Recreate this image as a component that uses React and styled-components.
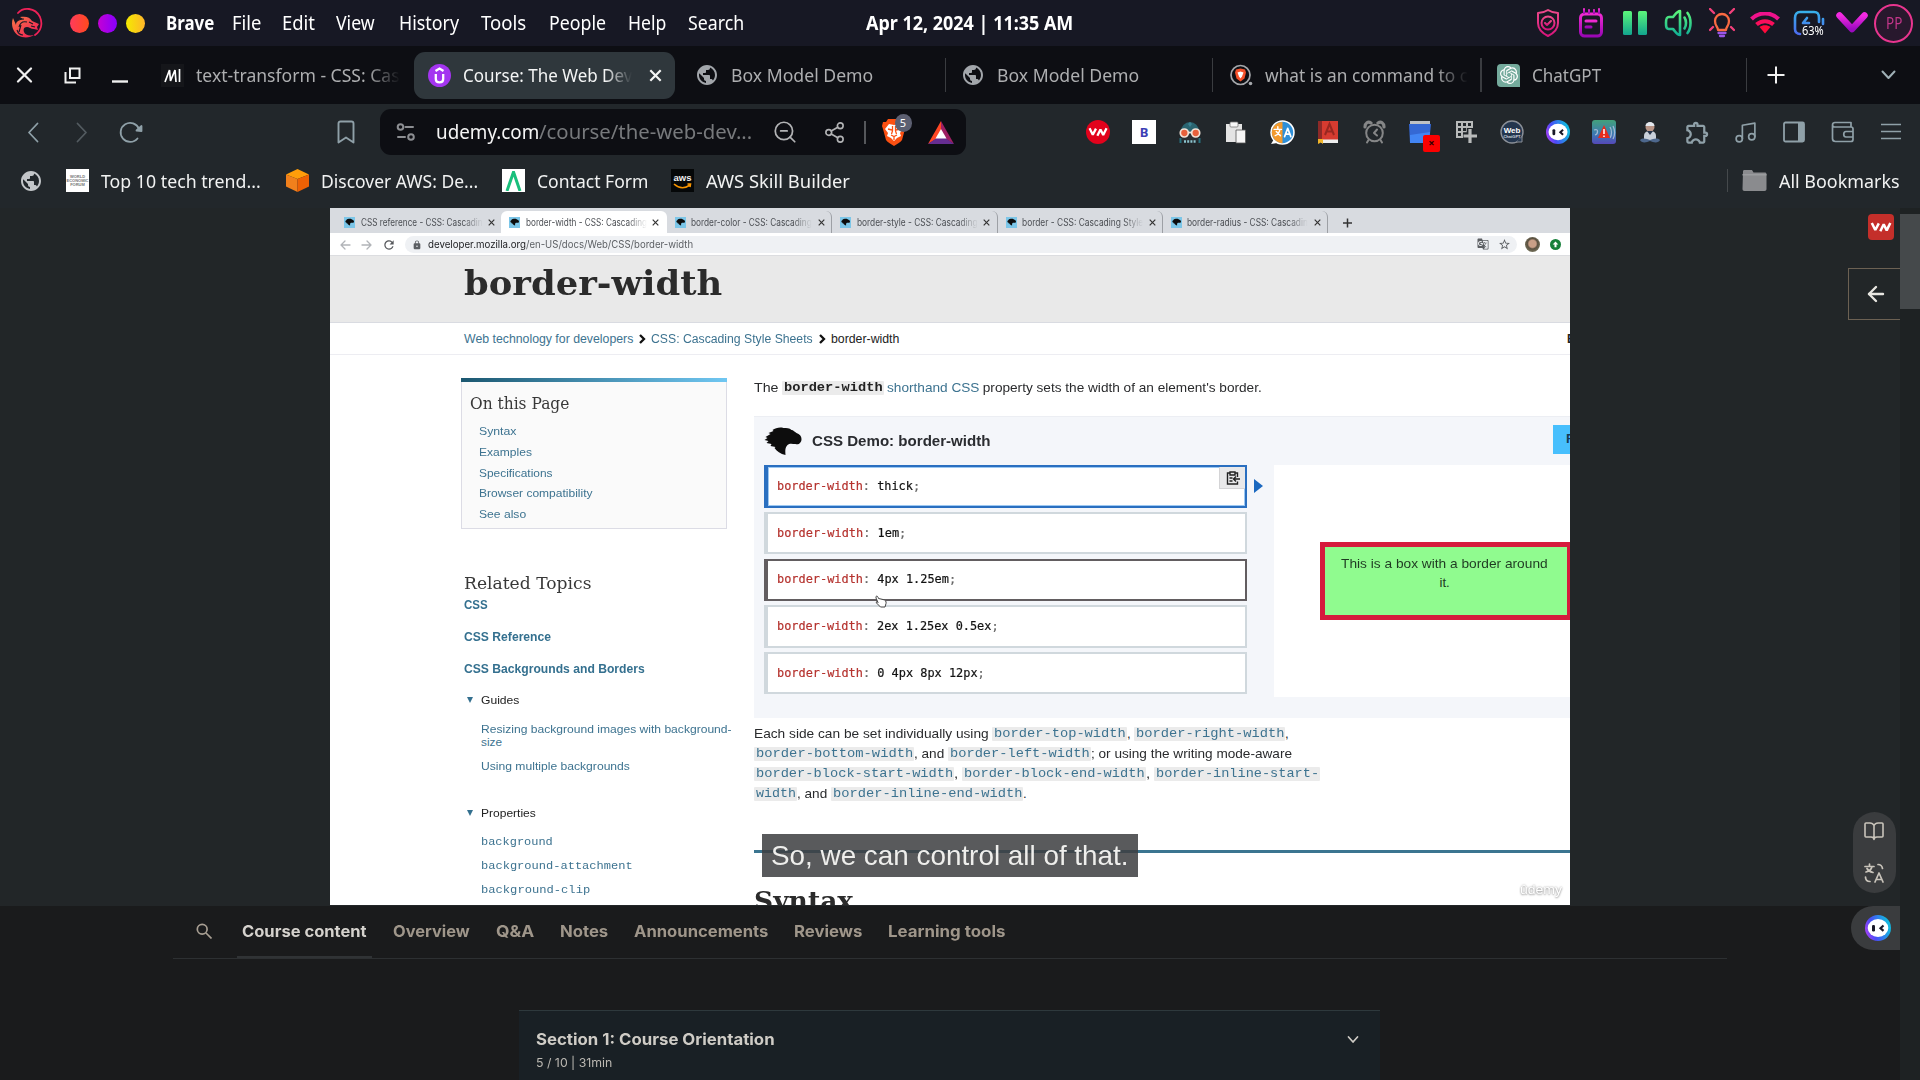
import React, { useLayoutEffect, useRef, useState } from "react";
import styled, { createGlobalStyle, css } from "styled-components";
import { Music, Share2, ArrowLeft, ZoomOut } from "lucide-react";
import { MdPublic, MdGTranslate, MdLock, MdStarBorder, MdRefresh, MdOutlineExtension } from "react-icons/md";
import { SiBrave, SiOpenai } from "react-icons/si";

const Global = createGlobalStyle`
  * { box-sizing: border-box; }
  body { margin: 0; background: #1a1b1c; overflow: hidden; font-family: "Noto Sans", "Open Sans", sans-serif; }
  svg { display: block; flex-shrink: 0; }
`;

const ui = '"Noto Sans", "Open Sans", sans-serif';
const sans = '"Liberation Sans", Arial, sans-serif';
const mono = '"Liberation Mono", "Courier New", monospace';
const code = '"DejaVu Sans Mono", monospace';
const slab = '"DejaVu Serif", serif';
const inter = 'Inter, "Open Sans", sans-serif';

/* Text whose glyph run is condensed or expanded to a given measure */
const FitBox = styled.span`
  display: inline-block;
  flex-shrink: 0;
  white-space: pre;
  width: ${(p) => p.$w}px;
  ${(p) => p.$fade && css`
    -webkit-mask-image: linear-gradient(90deg, #000 84%, transparent 100%);
    mask-image: linear-gradient(90deg, #000 84%, transparent 100%);
  `}
`;
const FitRun = styled.span`
  display: inline-block;
  transform-origin: 0 50%;
`;
function Fit({ w, fade, children, className }) {
  const ref = useRef(null);
  const [k, setK] = useState(1);
  useLayoutEffect(() => {
    if (ref.current) setK(w / ref.current.offsetWidth);
  }, [w, children]);
  return (
    <FitBox $w={w} $fade={fade} className={className}>
      <FitRun ref={ref} style={{ transform: `scaleX(${k})` }}>{children}</FitRun>
    </FitBox>
  );
}

const Screen = styled.div`
  width: 1920px; height: 1080px; overflow: hidden;
  display: flex; flex-direction: column; background: #1a1b1c;
`;

/* ---------- system bar ---------- */
const SystemBar = styled.header`
  height: 46px; flex-shrink: 0; background: #171824; color: #fff;
  display: grid; grid-template-columns: 866px 1fr auto; align-items: center;
`;
const SystemLeft = styled.div`display: flex; align-items: center; padding-left: 11px;`;
const Lights = styled.div`display: flex; gap: 9px; margin: 0 21px 0 27px;`;
const Light = styled.i`width: 19px; height: 19px; border-radius: 50%; background: ${(p) => p.$c};`;
const MenuItem = styled(Fit)`
  font: ${(p) => (p.$bold ? 700 : 400)} 19px/28px ${ui};
  margin-right: ${(p) => p.$gap}px;
`;
const Clock = styled(Fit)`font: 700 19px/28px ${ui}; margin-top: -1px;`;
const Tray = styled.div`display: flex; align-items: center; padding-right: 7px;`;
const TrayCell = styled.div`
  width: 43.5px; height: 44px; display: grid; place-items: center; position: relative;
`;
const Percent = styled(Fit)`
  position: absolute; left: 15px; top: 22px; font: 400 12px/16px ${ui};
`;
const Avatar = styled.div`
  width: 39px; height: 39px; border-radius: 50%; border: 2px solid #e8358f; background: #28182d;
  color: #c3368a; display: grid; place-items: center; font: 400 16px/20px ${ui};
`;

/* ---------- browser tabs ---------- */
const TabStrip = styled.div`
  height: 58px; flex-shrink: 0; background: #0d0e13; display: flex; align-items: center; color: #b0b1b3;
`;
const WindowButtons = styled.div`width: 149px; padding-left: 16px; display: flex; align-items: center; gap: 31px;`;
const Tab = styled.div`
  width: ${(p) => p.$w}px; height: 47px; flex-shrink: 0; padding-left: ${(p) => p.$pl}px;
  display: flex; align-items: center; gap: 12px;
  border-radius: ${(p) => (p.$active ? "11px" : 0)};
  background: ${(p) => (p.$active ? "#2f373c" : "transparent")};
  color: ${(p) => (p.$active ? "#f4f5f5" : "#adaeb0")};
  font: 400 18.5px/26px ${ui};
`;
const TabClose = styled.div`margin-left: 5px;`;
const Divider = styled.i`
  width: 1.5px; height: ${(p) => p.$h}px; background: #3a3c40; margin-left: auto; flex-shrink: 0;
`;
const Favicon = styled.div`
  width: 23px; height: 23px; flex-shrink: 0; display: grid; place-items: center; overflow: hidden;
  background: ${(p) => p.$bg || "transparent"}; border-radius: ${(p) => p.$r || 0};
  color: ${(p) => p.$c || "#fff"}; position: relative;
`;
const StripActions = styled.div`flex: 1; padding: 0 24px 0 20px; display: flex; justify-content: space-between; align-items: center;`;

/* ---------- toolbar ---------- */
const Toolbar = styled.div`
  height: 56px; flex-shrink: 0; background: #22272b; display: flex; align-items: center; color: #8fa0a8;
`;
const Nav = styled.div`width: 380px; padding: 0 25px 0 27px; display: flex; align-items: center; gap: 37px;`;
const Reload = styled.div`margin-left: -6px;`;
const NavEnd = styled.div`margin-left: auto;`;
const Address = styled.div`
  width: 586px; height: 46px; border-radius: 11px; background: #0d0e13; padding-left: 16px;
  display: flex; align-items: center; color: #b2b3b5; flex-shrink: 0;
`;
const Url = styled.div`
  margin: 0 20px 0 20px; display: flex; font: 400 19px/28px ${ui}; color: #77797c;
  b { font-weight: 400; color: #f5f5f5; }
`;
const ShareSlot = styled.div`margin-left: 25px;`;
const Rule = styled.i`width: 1.5px; height: 23px; background: #55575b; margin: 0 15px 0 18px;`;
const Shield = styled.div`position: relative; margin-right: 21px; color: #fb5012;`;
const Count = styled.span`
  position: absolute; left: 14px; top: -4px; width: 17px; height: 18px; border-radius: 9px;
  background: #5c5f71; color: #fff; text-align: center; font: 400 11px/17px ${ui};
`;
const Extensions = styled.div`display: flex; align-items: center; margin-left: 109px;`;
const ExtCell = styled.div`
  width: ${(p) => (p.$wide ? 48.5 : 46)}px; height: 46px; display: grid; place-items: center; position: relative; flex-shrink: 0;
`;
const Chip = styled.div`
  width: 24px; height: 24px; display: grid; place-items: center; overflow: hidden;
  border-radius: ${(p) => p.$r || 0}; background: ${(p) => p.$bg}; color: ${(p) => p.$c};
  font: ${(p) => p.$font};
`;
const RedBadge = styled.span`
  position: absolute; left: 26px; top: 26px; width: 17px; height: 17px; border-radius: 2px;
  background: #fb0000; color: #300; text-align: center; font: 700 11px/16px ${ui};
`;

/* ---------- bookmarks ---------- */
const Bookmarks = styled.div`
  height: 48px; flex-shrink: 0; background: #22272b; padding: 0 20px 7px 19px; display: flex; align-items: center; color: #f1f2f2;
`;
const Bookmark = styled.div`
  display: flex; align-items: center; gap: 12px; margin-right: ${(p) => p.$gap}px; font: 400 18.5px/28px ${ui};
`;
const BookmarkEnd = styled.div`display: flex; align-items: center; gap: 12px; margin-left: auto; font: 400 18.5px/28px ${ui};`;
const BookmarkRule = styled.i`width: 1.5px; height: 23px; background: #45494c; margin-right: 2px;`;
const WefText = styled.span`font: 700 4px/4px ${sans}; color: #777; text-align: center; white-space: pre;`;
const Aws = styled.div`
  display: flex; flex-direction: column; align-items: center; font: 700 9.5px/10px ${sans}; color: #eee;
`;

/* ---------- page ---------- */
const Body = styled.main`flex: 1; min-height: 0; display: flex; position: relative;`;
const Page = styled.div`width: 1900px; display: flex; flex-direction: column;`;
const Scrollbar = styled.div`width: 20px; background: #1e2223; padding-top: 6px;`;
const Thumb = styled.div`height: 95px; background: #45494b;`;
const Stage = styled.section`height: 697.5px; flex-shrink: 0; background: #222628; padding-left: 330px;`;
const Video = styled.div`
  width: 1240px; height: 697px; background: #fff; position: relative; overflow: hidden; color: #1f2123;
  font-family: ${sans};
`;
const InnerTabs = styled.div`height: 25px; background: #d8dbe0; display: flex; align-items: flex-end; padding-left: 6px;`;
const InnerTab = styled.div`
  width: 165.4px; height: 22px; display: flex; align-items: center; padding: 0 0 0 8px; gap: 5.5px; flex-shrink: 0;
  background: ${(p) => (p.$active ? "#fff" : "transparent")}; border-radius: 6px 6px 0 0;
  font: 400 10px/14px Inter, ${sans}; color: #4a4d52;
  border-right: 1px solid ${(p) => (p.$rule ? "#9da0a5" : "transparent")};
`;
const InnerIcon = styled.i`
  width: 11px; height: 11px; background: #7cc6e8; display: grid; place-items: center; flex-shrink: 0;
`;
const NewTab = styled.div`padding: 0 0 5px 15px;`;
const InnerBar = styled.div`
  height: 23px; border-bottom: 1px solid #dcdde0; display: flex; align-items: center; padding: 1px 0 0 10px; gap: 10px; color: #56585c;
`;
const Omni = styled.div`
  width: 1112px; height: 17px; border-radius: 9px; background: #eff1f4; padding: 0 6px 0 7px; margin-left: -1px;
  display: flex; align-items: center; gap: 6px; font: 400 10.5px/14px Inter, ${sans}; color: #5c5f63;
  b { font-weight: 400; color: #202124; }
`;
const OmniEnd = styled.div`margin-left: auto; display: flex; gap: 9px;`;
const Face = styled.i`
  width: 15px; height: 15px; border-radius: 50%; margin-left: -2px;
  background: radial-gradient(circle at 50% 45%, #c99f87 0 32%, #5a5040 46%, #8e9276 100%);
`;
const TitleBand = styled.div`
  height: 67px; background: #e9e9e9; border-bottom: 1px solid #d9dbe1; padding: 4px 0 0 134px;
`;
const Title = styled(Fit)`font: 700 34px/46px ${slab}; color: #2b2b2b;`;
const Crumbs = styled.nav`
  height: 32px; border-bottom: 1px solid #ededf2; padding: 0 0 0 134px; display: flex; align-items: center;
  font: 400 12.3px/18px ${sans}; color: #3d7390; gap: 5.5px;
`;
const CrumbNow = styled.span`color: #222;`;
const Cut = styled.b`margin-left: auto; width: 3px; overflow: hidden; font: 700 12px/14px ${sans}; color: #222;`;
const Columns = styled.div`display: flex; padding-left: 131px;`;
const Side = styled.aside`width: 293px; flex-shrink: 0; padding-top: 23px;`;
const Toc = styled.div`
  width: 266px; height: 151px; border: 1px solid #dcdce5; background: #fafafa; border-top: 0; padding: 0 0 0 9px;
`;
const TocBar = styled.div`height: 4px; margin: 0 -1px 0 -10px; background: linear-gradient(90deg, #1b5770, #70c7f2);`;
const SlabHead = styled(Fit)`display: block; font: 400 17px/24px ${slab}; color: #383838;`;
const TocTitle = styled(SlabHead)`margin: 9px 0 6px -1px;`;
const TocLink = styled(Fit)`display: block; margin-left: 8px; font: 400 11.6px/20.8px ${sans}; color: #3d7390;`;
const Related = styled.div`padding: 42px 0 0 3px;`;
const Topic = styled(Fit)`display: block; font: 700 12px/18px ${sans}; color: #34708f; margin-bottom: 14px; position: relative; top: 1px;`;
const Group = styled.div`
  display: flex; align-items: center; gap: 8px; height: 18px; padding-left: 3px; font: 400 11.8px/18px ${sans};
  color: #222; margin-top: ${(p) => p.$mt || 0}px;
  &::before { content: ""; border: 3px solid transparent; border-top: 6px solid #34708f; border-bottom: 0; }
`;
const SideLink = styled(Fit)`
  display: block; margin: ${(p) => p.$mt}px 0 0 17px; font: 400 11.8px/13px ${sans}; color: #3d7390;
`;
const SideCode = styled(Fit)`
  display: block; margin: ${(p) => p.$mt}px 0 0 17px; font: 400 11.8px/14px ${mono}; color: #3d7390;
`;
const Article = styled.article`width: 816px; flex-shrink: 0; padding-top: 23px;`;
const Line = styled.div`display: flex; align-items: center; height: 20.2px; font: 400 13.2px/18px ${sans}; white-space: pre; color: #2a2b2d;`;
const Link = styled.span`color: #3d7390; display: flex;`;
const Code = styled.span`
  display: flex; align-items: center; height: 14px; background: #ebebeb; border-radius: 1px; padding: 0 1.5px;
  font: ${(p) => (p.$bold ? 700 : 400)} 13px/14px ${mono}; color: ${(p) => (p.$bold ? "#222" : "#3d7390")};
`;
const Demo = styled.div`
  height: 302px; margin: 17.5px 0 6px; background: #f4f6fa; border-top: 1px solid #eceef3; padding-left: 10px;
`;
const DemoHead = styled.div`height: 48.5px; display: flex; align-items: center; gap: 10px; font: 700 15px/20px ${sans}; color: #2a2c30;`;
const Reset = styled.div`
  margin-left: auto; width: 17px; height: 29px; margin-bottom: 2px; overflow: hidden; background: #47bffd; padding-left: 13px;
  font: 700 13px/28px ${sans}; color: #173a52;
`;
const DemoRow = styled.div`display: flex;`;
const Choices = styled.div`width: 483px; display: flex; flex-direction: column; gap: 4.3px;`;
const Choice = styled.div`
  height: 42.4px; background: #fff; display: flex; align-items: center; padding: 0 0 1px 9px; position: relative;
  border: 2px solid ${(p) => p.$c}; border-left-width: 4px; font: 400 12.3px/18px ${code}; color: #111;
  box-shadow: ${(p) => (p.$glow ? "inset 0 0 0 1px #9cc8f2" : "none")};
  -webkit-text-stroke: 0.2px currentColor;
  em { font-style: normal; color: #b5332f; } i { font-style: normal; color: #666; }
`;
const CopyButton = styled.div`
  position: absolute; right: 0; top: 0; width: 26px; height: 22px; background: #e9e9ea; display: grid; place-items: center;
  border: 1px solid #d4d4d6; border-top: 0; border-right: 0; color: #222;
`;
const Pointer = styled.i`
  margin: 13.5px 11px 0 7px; width: 0; height: 0; border: 7.5px solid transparent; border-left: 9px solid #1b69c0; border-right: 0;
`;
const Output = styled.div`width: 296px; height: 232px; background: #fff; padding: 77px 0 0 46px;`;
const Sample = styled.div`
  width: 250px; height: 78px; border: 5px solid #d61a3d; border-right-width: 3px; background: #90fb8f; padding: 8px 3px 0 0;
  display: flex; flex-direction: column; align-items: center; font: 400 13.2px/18.5px ${sans}; color: #1f3a22;
`;
const BlueRule = styled.hr`height: 3px; border: 0; background: #3b7590; margin: 46px 0 31px;`;
const Syntax = styled(Fit)`font: 700 26px/34px ${slab}; color: #2b2b2b;`;
const Caption = styled.div`
  position: absolute; left: 432px; top: 626px; width: 376px; height: 43px; background: rgba(62, 63, 65, 0.86);
  padding-left: 9px; color: #eeeeec; font: 400 28px/43px ${sans};
`;
const Watermark = styled(Fit)`
  position: absolute; left: 1190px; top: 672px; font: 400 13px/20px ${sans}; color: #fff;
  text-shadow: 0 0 2px #999, 0 1px 2px #aaa;
`;
const Cursor = styled.svg`position: absolute; left: 545px; top: 387px;`;

/* ---------- course panel ---------- */
const CoursePanel = styled.section`flex: 1; background: #1a1b1c; padding-left: 173px; border-bottom: 1px solid #0b0b0b;`;
const CourseTabs = styled.div`
  width: 1554px; height: 53px; border-bottom: 1px solid #2d3032; display: flex; padding-left: 23px; align-items: center;
  color: #9f968a; font: 700 16px/24px ${inter};
`;
const CourseTab = styled.div`
  height: 53px; padding: 14px ${(p) => (p.$active ? 5 : 0)}px 0 ${(p) => (p.$active ? 5 : 0)}px; margin-right: ${(p) => (p.$active ? 21 : 26)}px;
  color: ${(p) => (p.$active ? "#d5d2cd" : "#9f968a")};
  border-bottom: ${(p) => (p.$active ? "2px solid #303335" : "0")};
`;
const SearchMark = styled.svg`margin: 0 25px 1px 0;`;
const SectionCard = styled.div`
  width: 861px; height: 70px; margin: 51.5px 0 0 346px; background: #192025; border-top: 1px solid #2e393d;
  padding: 16px 21px 0 17px; display: flex; justify-content: space-between; align-items: flex-start; color: #cfccc6;
`;
const SectionTitle = styled(Fit)`display: block; font: 700 16px/24px ${inter};`;
const SectionMeta = styled(Fit)`display: block; font: 400 12px/16px ${inter}; margin-top: 4px; color: #bbb8b2;`;

/* ---------- floating widgets ---------- */
const VnButton = styled.div`
  position: absolute; left: 1868px; top: 6px; width: 26px; height: 26px; border-radius: 4px; background: #c42f2a;
  display: grid; place-items: center;
`;
const CollapseButton = styled.div`
  position: absolute; left: 1848px; top: 60px; width: 52px; height: 52px; border: 1px solid #6c6153; border-right: 0;
  color: #e8e6e1; display: grid; place-items: center; padding-left: 2px;
`;
const ToolPill = styled.div`
  position: absolute; left: 1853px; top: 604px; width: 43px; height: 81px; border-radius: 22px; background: #3a3c3e;
  display: flex; flex-direction: column; align-items: center; justify-content: space-between; padding: 10px 2px 10px 0;
`;
const BotBubble = styled.div`
  position: absolute; left: 1851px; top: 698px; width: 49px; height: 44px; border-radius: 22px 0 0 22px; background: #3a3c3e;
  display: grid; place-items: center; padding-left: 5px;
`;

const line = { fill: "none", stroke: "currentColor", strokeLinecap: "round", strokeLinejoin: "round" };

const Vn = ({ size }) => (
  <svg width={size} height={size} viewBox="0 0 24 24" fill="none" stroke="#fff" strokeWidth="2.5" strokeLinejoin="bevel">
    <path d="M2.800 8l3.500 7L9.800 8.300" /><path d="M11.300 16.200l3.400-7 3 6.200L21.300 8" />
  </svg>
);
const Bot = ({ size }) => (
  <svg width={size} height={size} viewBox="0 0 26 26">
    <defs>
      <linearGradient id="bot" x1="0" y1="1" x2="1" y2="0.7">
        <stop offset="0" stopColor="#c43cf5" /><stop offset=".4" stopColor="#4a4cf7" /><stop offset="1" stopColor="#13b6e0" />
      </linearGradient>
    </defs>
    <circle cx="13" cy="13" r="13" fill="url(#bot)" />
    <ellipse cx="13" cy="13" rx="10.3" ry="9" fill="#fff" />
    <rect x="7" y="10" width="3" height="6.5" rx="1.2" fill="#181828" />
    <path d="M18.5 10.5l-3 2.700 3 2.700" fill="none" stroke="#181828" strokeWidth="2.2" />
  </svg>
);
const Dino = ({ w, h }) => (
  <svg width={w} height={h} viewBox="0 0 37 28">
    <path fill="#0d0d0d" d="M1 10l5-3-2-1 5-2-1-1C11 1 15 0 19 1c3 0 6 0 8 2 2 0 3 2 5 3 3 1 5 3 5 6 0 4-3 6-6 5-3 0-6-1-8 1-3 3-2 7-2 10-5-1-9-4-11-7l1-1-5-1 1-2-5-1 2-2-4-1 3-2z" />
  </svg>
);
const Dragon = () => (
  <svg width="32" height="32" viewBox="0 0 32 32">
    <defs>
      <linearGradient id="dr" x1="0" y1="0" x2="1" y2="1"><stop offset="0" stopColor="#fa7a45" /><stop offset="1" stopColor="#ef1358" /></linearGradient>
    </defs>
    <path d="M7 6C12 0 24 0 29 10c3 7 1 14-5 18" fill="none" stroke="#ef2258" strokeWidth="1.8" strokeLinecap="round" />
    <path d="M2 11C-1 19 3 28 11 30c5 1 9 0 12-2-5 1-9 0-10-3-1-3 0-5 3-5 2 0 4 2 7 2l4 1-1-3 2-3-7-3c-2-4-6-5-12-4l3 2c-5 0-7 3-7 6l-3-7z" fill="url(#dr)" />
    <path d="M8 20c1-4 4-6 8-5M6 23c1 3 3 5 6 5M18 15l4 2M10 18l-2 7M13 12c-4 0-6 1-8 3M20 19l4 1" fill="none" stroke="#171824" strokeWidth="1.100" />
  </svg>
);
const Grad = ({ id, a, b }) => (
  <defs><linearGradient id={id} x1="0" y1="0" x2="0" y2="1"><stop offset="0" stopColor={a} /><stop offset="1" stopColor={b} /></linearGradient></defs>
);

const TrayIcons = [
  <svg width="26" height="30" viewBox="0 0 26 30" {...line} strokeWidth="2"><Grad id="t1" a="#ef4b8c" b="#d8147c" />
    <g stroke="url(#t1)"><path d="M13 2c3 2 6 3 10 3v10c0 6-4 10-10 13C7 25 3 21 3 15V5c4 0 7-1 10-3z" /><circle cx="13" cy="15" r="6.5" /><path d="M10 15l2 2 4-4" /></g></svg>,
  <svg width="26" height="30" viewBox="0 0 26 30" {...line} strokeWidth="3"><Grad id="t2" a="#f02bd0" b="#9b07b5" />
    <g stroke="url(#t2)"><rect x="2.5" y="6" width="21" height="22" rx="4" /><path d="M8 13h10M8 19h5" /><path d="M6 1v4M11 2v3M16 2v3M21 1v4" strokeWidth="2" /></g></svg>,
  <svg width="26" height="26" viewBox="0 0 26 26"><Grad id="t3" a="#5cf57a" b="#12a58e" />
    <rect x="1" y="1" width="9" height="24" rx="1.5" fill="url(#t3)" /><rect x="16" y="1" width="9" height="24" rx="1.5" fill="url(#t3)" /></svg>,
  <svg width="28" height="28" viewBox="0 0 28 28" {...line} strokeWidth="2.6"><Grad id="t4" a="#5cf57a" b="#12b095" />
    <g stroke="url(#t4)"><path d="M16 2v24c-3 0-5-4-7-6H5c-3 0-3-3-3-6s0-6 3-6h4c2-2 4-6 7-6zM20.500 8.500c2 3 2 8 0 11M23.500 4c4 5 4 15 0 20" /></g></svg>,
  <svg width="26" height="30" viewBox="0 0 26 30" {...line} strokeWidth="2.300">
    <path stroke="#fb6a42" d="M9 22c0-3-3-4-3-9a7 7 0 0 1 14 0c0 5-3 6-3 9z" /><path stroke="#f5407c" d="M1 1l4 4M25 1l-4 4M1 22l3-3M25 22l-3-3" /><path stroke="#9a55e8" d="M9.500 25h7M11 28h4" /></svg>,
  <svg width="30" height="22" viewBox="0 0 30 22" fill="none" strokeWidth="4">
    <path stroke="#f0128c" d="M1.500 7C9-.5 21-.5 28.500 7" /><path stroke="#fa0e5c" d="M6.500 12.500c5-4.500 12-4.500 17 0" /><path fill="#ff0a3c" d="M9.500 15c3-2.500 8-2.500 11 0L15 21.500z" /></svg>,
  <svg width="32" height="26" viewBox="0 0 32 26" {...line} strokeWidth="2.600"><Grad id="t5" a="#38b0ea" b="#4c6cf0" />
    <path stroke="url(#t5)" d="M7 24c-3 0-5-2-5-5V8c0-4 2-6 5-6h14c4 0 5 2 5 6v4M30 9v5M14 8l-4 5h6" /></svg>,
  <svg width="32" height="22" viewBox="0 0 32 22" {...line} strokeWidth="6.500"><Grad id="t6" a="#f32ae0" b="#9c0ac0" />
    <path stroke="url(#t6)" d="M3.500 3.500L16 17 28.500 3.500" /></svg>,
];

const Extension = [
  <Chip $bg="#e2021c" $r="50%"><Vn size={22} /></Chip>,
  <Chip $bg="#fff" $c="#3b3fb5" $font={`700 13px/24px ${ui}`}>B</Chip>,
  <svg width="24" height="24" viewBox="0 0 24 24"><path fill="#2a6470" d="M3 11a9 9 0 0 1 18 0v3H3z" /><path fill="#2b2f33" d="M4 14h16v7H4z" /><path d="M10 4l2-2 2 2-2 3z" fill="#3b8291" /><g fill="#e8613c" stroke="#f2e3d8" strokeWidth="1.700"><circle cx="6.300" cy="13" r="4" /><circle cx="17.700" cy="13" r="4" /></g><path d="M10 12.500h4" stroke="#f2e3d8" strokeWidth="1.700" /><path d="M6 21.500h12" stroke="#8cc5d0" strokeWidth="2.500" strokeDasharray="2 1.200" /><path d="M2.500 18v5M21.500 18v5" stroke="#27707e" strokeWidth="2" /></svg>,
  <svg width="24" height="24" viewBox="0 0 24 24"><path fill="#e4e4e4" d="M2 4h16v18H2z" /><rect x="6" y="2" width="8" height="5" rx="1" fill="#f8f8f8" stroke="#777" strokeWidth=".8" /><path fill="#f6f6f6" stroke="#555" strokeWidth=".8" d="M12 10h9.500v13H12z" /></svg>,
  <svg width="25" height="25" viewBox="0 0 24 24"><path d="M1 23l3-5 3 4z" fill="#fff" /><circle cx="12" cy="12" r="11" fill="#2e8fd8" stroke="#fff" strokeWidth="1.500" /><path d="M12 1.800a10.200 10.200 0 0 0 0 20.400z" fill="#f39a2c" /><path d="M4 9h7M7.500 6.500V9M5 15c3-1 4-3 4.500-6M6 11l4 4" {...line} stroke="#fff" strokeWidth="1.400" /><path d="M14 16l3-8 3 8M15 13.500h4" {...line} stroke="#fff" strokeWidth="1.600" /></svg>,
  <svg width="22" height="24" viewBox="0 0 22 24"><path fill="#d63b30" d="M1 1h20v19H1z" /><path fill="#8d2a28" d="M1 1h4v20H1z" /><path fill="#eee" d="M4 19.500h17V23H4z" /><path d="M8 15l4.500-11L17 15M10 11.500h5" fill="none" stroke="#982720" strokeWidth="2" /><path fill="#f0b429" d="M1 19h5v5l-2-1.500L1 24z" /></svg>,
  <svg width="23" height="24" viewBox="0 0 23 24" {...line} stroke="#858687" strokeWidth="2"><circle cx="11.500" cy="13" r="8.300" /><path d="M2 7c0-4 3-6 6-4M21 7c0-4-3-6-6-4" strokeWidth="3.200" /><path d="M14 9.500L11 13l3 2.500M5.500 20L4 22.500M17.500 20l1.500 2.500" /></svg>,
  <><svg width="24" height="24" viewBox="0 0 24 24"><path fill="#3568d4" d="M1 4h22l-2 19H2z" /><path fill="#4285f4" d="M2 15l20-3-1 11H2z" /><path fill="#bfc1c4" d="M2 1h20v3H2z" /></svg><RedBadge>×</RedBadge></>,
  <svg width="24" height="24" viewBox="0 0 24 24" fill="none" stroke="#b8baba"><path d="M3 2h15v15H3zM8 2v15M13 2v15M3 7h15M3 12h15" strokeWidth="2" /><path d="M16 8v16M9 15.500h15" stroke="#22272b" strokeWidth="6.500" /><path d="M16 9v14M9.500 16h13.500" strokeWidth="3.200" /></svg>,
  <svg width="24" height="24" viewBox="0 0 24 24"><circle cx="12" cy="12" r="11" fill="#24364e" stroke="#8b9098" strokeWidth="1.400" /><path d="M16 22h6v-5" fill="#24364e" stroke="#8b9098" /><text x="12" y="12.500" fill="#fff" fontFamily="Liberation Sans" fontWeight="700" fontSize="8" textAnchor="middle">Web</text><text x="12" y="18" fill="#cfd6dd" fontFamily="Liberation Sans" fontWeight="700" fontSize="4" textAnchor="middle">ChatGPT</text></svg>,
  <Bot size={24} />,
  <svg width="24" height="24" viewBox="0 0 24 24"><defs><linearGradient id="ex" x1="0" y1="0" x2="0" y2="1"><stop offset="0" stopColor="#43a17b" /><stop offset=".6" stopColor="#3c77b4" /><stop offset="1" stopColor="#5548b8" /></linearGradient></defs><rect width="24" height="24" rx="3" fill="url(#ex)" /><path d="M2 10c5-2 4 4 1 5M18 7c2 3 2 8 0 11M21 6c2 4 2 9 0 13" fill="none" stroke="#9fb8d6" strokeWidth="1.300" /><path fill="#e62c1c" d="M12 5l6 13H6z" /><path d="M12 9v5M12 15.500v1.500" stroke="#fff" strokeWidth="1.500" /></svg>,
  <svg width="22" height="24" viewBox="0 0 22 24"><circle cx="11" cy="7" r="4.500" fill="#b99587" /><path d="M6.500 6a4.500 4 0 0 1 9 0z" fill="#e4e8ee" /><path d="M5 16c0-4 3-5 6-5s6 1 6 5v4H5z" fill="#c9d0da" /><path d="M8 11l3 4 3-4z" fill="#26354c" /><path d="M1 20c3-3 7-1 10 0 3-1 7-3 10 0-1 3-6 3-10 1-4 2-9 2-10-1z" fill="#4d678c" /></svg>,
];

const siteTabs = [
  ["CSS reference - CSS: Cascadin", 122], ["border-width - CSS: Cascading", 121], ["border-color - CSS: Cascading", 121],
  ["border-style - CSS: Cascading", 121], ["border - CSS: Cascading Style", 121], ["border-radius - CSS: Cascadin", 121],
];
const choices = [["thick", "#2a6fc0", 143], ["1em", "#d0d8dd", 129], ["4px 1.25em", "#625d60", 179], ["2ex 1.25ex 0.5ex", "#d0d8dd", 222], ["0 4px 8px 12px", "#d0d8dd", 208]];
const courseTabs = [["Course content", 125], ["Overview", 77], ["Q&A", 38], ["Notes", 48], ["Announcements", 134], ["Reviews", 68], ["Learning tools", 117]];
const menus = [["File", 29, 21], ["Edit", 33, 21], ["View", 39, 24], ["History", 60, 22], ["Tools", 45, 23], ["People", 57, 22], ["Help", 38, 22], ["Search", 56, 0]];

const Close = ({ s = 10, w = 1.8, c = "currentColor" }) => (
  <svg width={s} height={s} viewBox="0 0 10 10"><path d="M1 1l8 8M9 1L1 9" stroke={c} strokeWidth={w} /></svg>
);
const Ref = ({ w, children, bold }) => <Code $bold={bold}><Fit w={w - 3}>{children}</Fit></Code>;
const CrumbArrow = () => <svg width="7" height="10" viewBox="0 0 7 10"><path d="M1 1l4 4-4 4" fill="none" stroke="#111" strokeWidth="2.300" /></svg>;

export default function App() {
  return (
    <Screen>
      <Global />
      <SystemBar>
        <SystemLeft>
          <Dragon />
          <Lights>
            <Light $c="linear-gradient(90deg,#ff3b5c,#ff4a1c)" /><Light $c="linear-gradient(90deg,#c400d4,#8700ff)" /><Light $c="linear-gradient(90deg,#f4ea00,#ffb52a)" />
          </Lights>
          <MenuItem w={48} $bold $gap={18}>Brave</MenuItem>
          {menus.map(([t, w, g]) => <MenuItem key={t} w={w} $gap={g}>{t}</MenuItem>)}
        </SystemLeft>
        <Clock w={207}>Apr 12, 2024 | 11:35 AM</Clock>
        <Tray>
          {TrayIcons.map((icon, i) => <TrayCell key={i}>{icon}{i === 6 && <Percent w={22}>63%</Percent>}</TrayCell>)}
          <Avatar><Fit w={16}>PP</Fit></Avatar>
        </Tray>
      </SystemBar>

      <TabStrip>
        <WindowButtons>
          <svg width="17" height="16" viewBox="0 0 17 16" {...line} stroke="#f0f0f0" strokeWidth="2.200"><path d="M2 1.500l13 13M15 1.500l-13 13" /></svg>
          <svg width="17" height="17" viewBox="0 0 17 17" fill="none" stroke="#f0f0f0" strokeWidth="2"><path d="M6 1.500h9.500V11H6zM1.500 5v10.500H12" /></svg>
          <svg width="17" height="17" viewBox="0 0 17 17"><path d="M0 14.500h16" stroke="#f0f0f0" strokeWidth="2.400" /></svg>
        </WindowButtons>
        <Tab $w={265} $pl={12}>
          <Favicon $bg="#15161a"><svg width="17" height="15" viewBox="0 0 17 15" fill="none" stroke="#fff" strokeWidth="1.700"><path d="M1 14L5.500 2l1 11L11 2l1 12M15.500 1v13" /></svg></Favicon>
          <Fit w={204} fade>text-transform - CSS: Cas</Fit>
        </Tab>
        <Tab $w={261} $pl={14} $active>
          <Favicon $bg="#a435f0" $r="50%"><svg width="11" height="17" viewBox="0 0 11 17" fill="none" stroke="#fff" strokeWidth="2.300"><path d="M1.500 4L5.500 1.500 9.500 4M1.800 7v5c0 4.500 7.400 4.500 7.400 0V7" /></svg></Favicon>
          <Fit w={169} fade>Course: The Web Dev</Fit>
          <TabClose><Close s={13} w={1.7} /></TabClose>
        </Tab>
        <Tab $w={271} $pl={20}><MdPublic size={24} color="#a2a6ab" /><Fit w={142}>Box Model Demo</Fit><Divider $h={34} /></Tab>
        <Tab $w={267} $pl={15}><MdPublic size={24} color="#a2a6ab" /><Fit w={142}>Box Model Demo</Fit><Divider $h={34} /></Tab>
        <Tab $w={268} $pl={17}>
          <Favicon $c="#fb4a1a"><svg width="23" height="23" viewBox="0 0 23 23"><circle cx="10.500" cy="11" r="9.500" fill="none" stroke="#a5a7ab" strokeWidth="1.700" /><path fill="#f4502a" d="M10.500 4.500l4.500 1 1 3-1.500 6-4 3-4-3L5 8.500l1-3z" /><path fill="#fff" d="M10.500 7.500l3 1-1.500 4-1.500 2-1.500-2-1.500-4z" /><circle cx="20.500" cy="19.500" r="1.800" fill="#a5a7ab" /></svg></Favicon>
          <Fit w={203} fade>what is an command to c</Fit><Divider $h={34} />
        </Tab>
        <Tab $w={266} $pl={16}><Favicon $bg="#74aa9c" $r="4px 4px 0 4px"><SiOpenai size={18} /></Favicon><Fit w={69}>ChatGPT</Fit><Divider $h={34} /></Tab>
        <StripActions>
          <svg width="18" height="18" viewBox="0 0 18 18" stroke="#f2f2f2" strokeWidth="2"><path d="M9 .5v17M.5 9h17" /></svg>
          <svg width="15" height="10" viewBox="0 0 15 10" {...line} stroke="#9fb0b6" strokeWidth="2"><path d="M1.500 1.500l6 6.500 6-6.500" /></svg>
        </StripActions>
      </TabStrip>

      <Toolbar>
        <Nav>
          <svg width="12" height="21" viewBox="0 0 12 21" {...line} strokeWidth="1.800"><path d="M10.500 1.500L2 10.500l8.500 9" /></svg>
          <svg width="12" height="21" viewBox="0 0 12 21" {...line} stroke="#535b60" strokeWidth="1.800"><path d="M1.500 1.500l8.500 9-8.500 9" /></svg>
          <Reload><svg width="24" height="24" viewBox="0 0 24 24" {...line} strokeWidth="1.800"><path d="M20 9A9.500 9.500 0 1 0 18.500 18.500" /><path d="M22.500 6v5l-5-.5z" fill="currentColor" /></svg></Reload>
          <NavEnd><svg width="18" height="24" viewBox="0 0 18 24" {...line} strokeWidth="1.900"><path d="M1.500 3.500c0-1.500.7-2 2-2h11c1.300 0 2 .5 2 2v19L9 17.500l-7.500 5z" /></svg></NavEnd>
        </Nav>
        <Address>
          <svg width="20" height="18" viewBox="0 0 20 18" {...line} stroke="#8c8e92" strokeWidth="2"><circle cx="4.500" cy="4" r="2.800" /><path d="M9.500 4H17M2 14h7" /><circle cx="15" cy="14" r="2.800" /></svg>
          <Url><b><Fit w={103}>udemy.com</Fit></b><Fit w={213}>/course/the-web-dev...</Fit></Url>
          <ZoomOut size={26} strokeWidth={1.6} />
          <ShareSlot><Share2 size={23} strokeWidth={1.7} /></ShareSlot>
          <Rule />
          <Shield>
            <svg width="26" height="28" viewBox="0 0 26 28"><path fill="#fb5012" d="M7 1h12l2 3 3 0 1 4-1 3-3 11c-1 2-5 4-8 6-3-2-7-4-8-6L2 11 1 8l1-4h3z" /><path fill="#fff" d="M8 6l5 1 5-1 4 5-3 4 1 3-4 2-3 3-3-3-4-2 1-3-3-4z" /><path fill="none" stroke="#fb5012" strokeWidth="1.300" d="M7 11l4 1M19 11l-4 1M11.500 8v5l-1 3M14.500 8v5l1 3M10 17l3 1.500 3-1.500M13 19v3" /></svg>
            <Count>5</Count>
          </Shield>
          <svg width="26" height="23" viewBox="0 0 26 23"><path d="M13 0L0 23l13-8z" fill="#ff4724" /><path d="M13 0l13 23-13-8z" fill="#9e1f63" /><path d="M0 23h26l-13-9z" fill="#662d91" /><path d="M13 8l5.500 9.500h-11z" fill="#fff" /></svg>
        </Address>
        <Extensions>
          {Extension.map((icon, i) => <ExtCell key={i}>{icon}</ExtCell>)}
          <ExtCell $wide><MdOutlineExtension size={27} /></ExtCell>
          <ExtCell $wide><Music size={25} strokeWidth={1.6} /></ExtCell>
          <ExtCell $wide><svg width="22" height="22" viewBox="0 0 22 22"><rect x="1" y="1.500" width="20" height="19" rx="1.500" fill="none" stroke="currentColor" strokeWidth="1.800" /><path d="M15 1.500h6v19h-6z" fill="currentColor" /></svg></ExtCell>
          <ExtCell $wide><svg width="24" height="22" viewBox="0 0 24 22" {...line} strokeWidth="1.700"><path d="M1.500 4.500v13c0 2 1 3 3 3H20c1.500 0 2-.5 2-2V8c0-1.500-.5-2-2-2H3.500C2 6 1.500 5.500 1.500 4s1-2.500 2.500-2.500h16V6M22 10.500h-7c-3 0-3 5.500 0 5.500h7" /></svg></ExtCell>
          <ExtCell $wide><svg width="20" height="18" viewBox="0 0 20 18" stroke="currentColor" strokeWidth="1.700"><path d="M0 1.500h20M0 8.500h20M0 15.500h20" /></svg></ExtCell>
        </Extensions>
      </Toolbar>

      <Bookmarks>
        <Bookmark $gap={23}><MdPublic size={24} color="#c3c6c9" /></Bookmark>
        <Bookmark $gap={25}><Favicon $bg="#fff"><WefText>{"WORLD\nECONOMIC\nFORUM"}</WefText></Favicon><Fit w={160}>Top 10 tech trend...</Fit></Bookmark>
        <Bookmark $gap={24}><svg width="23" height="23" viewBox="0 0 23 23"><path fill="#ff9d0a" d="M11.500 0L23 5.500 11.500 10 0 5.500z" /><path fill="#f1801c" d="M0 5.500L11.500 10v13L0 17.500z" /><path fill="#ee6104" d="M23 5.500L11.500 10v13L23 17.500z" /></svg><Fit w={157}>Discover AWS: De...</Fit></Bookmark>
        <Bookmark $gap={23}><Favicon $bg="#fff"><svg width="17" height="20" viewBox="0 0 17 20" fill="none" stroke="#19bf7c" strokeWidth="3"><path d="M2 20L8.500 1 15 20" /></svg></Favicon><Fit w={111}>Contact Form</Fit></Bookmark>
        <Bookmark $gap={0}>
          <Favicon $bg="#050708"><Aws><Fit w={18}>aws</Fit><svg width="19" height="6" viewBox="0 0 19 6" fill="none" stroke="#f79400" strokeWidth="1.600"><path d="M1 1c5 4.500 11 4.500 16 1M14.500 1l3 0-.5 3" /></svg></Aws></Favicon>
          <Fit w={144}>AWS Skill Builder</Fit>
        </Bookmark>
        <BookmarkEnd>
          <BookmarkRule />
          <svg width="25" height="21" viewBox="0 0 25 21"><path fill="#8a8b8e" d="M1 1.500C1 .5 1.500 0 2.500 0H10l1.500 2.500h11c1.500 0 2 .5 2 2V19c0 1.300-.7 2-2 2h-20C1.200 21 .5 20.300.5 19z" /><path fill="#9b9c9f" d="M.5 4h24v1.500H.5z" /></svg>
          <Fit w={121}>All Bookmarks</Fit>
        </BookmarkEnd>
      </Bookmarks>

      <Body>
        <Page>
          <Stage>
            <Video>
              <InnerTabs>
                {siteTabs.map(([t, w], i) => (
                  <InnerTab key={t} $active={i === 1} $rule={i > 1}>
                    <InnerIcon><Dino w={9} h={8} /></InnerIcon><Fit w={w} fade>{t}</Fit><Close s={7} w={1.7} c="#333" />
                  </InnerTab>
                ))}
                <NewTab><svg width="9" height="10" viewBox="0 0 9 10" stroke="#333" strokeWidth="1.500"><path d="M4.500 .5v9M0 5h9" /></svg></NewTab>
              </InnerTabs>
              <InnerBar>
                <svg width="11" height="10" viewBox="0 0 11 10" {...line} stroke="#b1b4b8" strokeWidth="1.300"><path d="M10 5H1.500M5 1L1 5l4 4" /></svg>
                <svg width="11" height="10" viewBox="0 0 11 10" {...line} stroke="#b1b4b8" strokeWidth="1.300"><path d="M1 5h8.500M6 1l4 4-4 4" /></svg>
                <MdRefresh size={14} />
                <Omni>
                  <MdLock size={10} />
                  <span><b><Fit w={98}>developer.mozilla.org</Fit></b><Fit w={167}>/en-US/docs/Web/CSS/border-width</Fit></span>
                  <OmniEnd><MdGTranslate size={12} /><MdStarBorder size={13} /></OmniEnd>
                </Omni>
                <Face />
                <svg width="11" height="11" viewBox="0 0 11 11"><circle cx="5.500" cy="5.500" r="5.500" fill="#16803a" /><path d="M5.500 2.500l2.800 3H6.500v2.800h-2V5.500H2.700z" fill="#fff" /></svg>
              </InnerBar>
              <TitleBand><Title w={258}>border-width</Title></TitleBand>
              <Crumbs>
                <Fit w={169}>Web technology for developers</Fit><CrumbArrow />
                <Fit w={162}>CSS: Cascading Style Sheets</Fit><CrumbArrow />
                <CrumbNow><Fit w={68}>border-width</Fit></CrumbNow><Cut>E</Cut>
              </Crumbs>
              <Columns>
                <Side>
                  <Toc>
                    <TocBar />
                    <TocTitle w={99}>On this Page</TocTitle>
                    <TocLink w={37}>Syntax</TocLink><TocLink w={53}>Examples</TocLink><TocLink w={74}>Specifications</TocLink>
                    <TocLink w={114}>Browser compatibility</TocLink><TocLink w={47}>See also</TocLink>
                  </Toc>
                  <Related>
                    <SlabHead w={127}>Related Topics</SlabHead>
                    <Topic w={24}>CSS</Topic><Topic w={87}>CSS Reference</Topic><Topic w={181}>CSS Backgrounds and Borders</Topic>
                    <Group><Fit w={38}>Guides</Fit></Group>
                    <SideLink w={251} $mt={14}>Resizing background images with background-</SideLink>
                    <SideLink w={21} $mt={0}>size</SideLink>
                    <SideLink w={149} $mt={11}>Using multiple backgrounds</SideLink>
                    <Group $mt={31}><Fit w={55}>Properties</Fit></Group>
                    <SideCode w={72} $mt={13}>background</SideCode>
                    <SideCode w={152} $mt={10}>background-attachment</SideCode>
                    <SideCode w={109} $mt={10}>background-clip</SideCode>
                  </Related>
                </Side>
                <Article>
                  <Line><Fit w={28}>The </Fit><Ref bold w={102}>border-width</Ref><Fit w={3}> </Fit><Link><Fit w={92}>shorthand CSS</Fit></Link><Fit w={283}> property sets the width of an element's border.</Fit></Line>
                  <Demo>
                    <DemoHead><Dino w={38} h={28} /><Fit w={179}>CSS Demo: border-width</Fit><Reset>F</Reset></DemoHead>
                    <DemoRow>
                      <Choices>
                        {choices.map(([v, c, w], i) => (
                          <Choice key={v} $c={c} $glow={i === 0}>
                            <Fit w={w}><em>border-width</em><i>: </i>{v}<i>;</i></Fit>
                            {i === 0 && <CopyButton><svg width="14" height="14" viewBox="0 0 14 14" fill="none" stroke="#222" strokeWidth="1.400"><path d="M3.500 2H1.500v11h10v-2.500M9.500 2h2v4M4 1h5v3H4zM14 8H7.500M10 5.500L7.500 8l2.500 2.500M3.500 7h3M3.500 10h3" /></svg></CopyButton>}
                          </Choice>
                        ))}
                      </Choices>
                      <Pointer />
                      <Output><Sample><Fit w={207}>This is a box with a border around</Fit><Fit w={10}>it.</Fit></Sample></Output>
                    </DemoRow>
                  </Demo>
                  <Line><Fit w={238}>Each side can be set individually using </Fit><Ref w={135}>border-top-width</Ref><Fit w={7}>, </Fit><Ref w={151}>border-right-width</Ref>,</Line>
                  <Line><Ref w={160}>border-bottom-width</Ref><Fit w={34}>, and </Fit><Ref w={143}>border-left-width</Ref><Fit w={201}>; or using the writing mode-aware</Fit></Line>
                  <Line><Ref w={200}>border-block-start-width</Ref><Fit w={8}>, </Fit><Ref w={184}>border-block-end-width</Ref><Fit w={8}>, </Fit><Ref w={166}>border-inline-start-</Ref></Line>
                  <Line><Ref w={43}>width</Ref><Fit w={34}>, and </Fit><Ref w={192}>border-inline-end-width</Ref>.</Line>
                  <BlueRule />
                  <Syntax w={99}>Syntax</Syntax>
                </Article>
              </Columns>
              <Cursor width="12" height="13" viewBox="0 0 12 13"><path d="M1 1.500c1-1 2 0 2.500 2l4.500 1c2.500.5 3.500 2 3 4L10 12H5.500L1.500 8c-.7-1.500.3-2 1.500-.500L1 3z" fill="#fff" stroke="#444" /></Cursor>
              <Caption><Fit w={358}>So, we can control all of that.</Fit></Caption>
              <Watermark w={42}>ûdemy</Watermark>
            </Video>
          </Stage>
          <CoursePanel>
            <CourseTabs>
              <SearchMark width="16" height="16" viewBox="0 0 16 16" fill="none" stroke="#a89f93" strokeWidth="1.700"><circle cx="6.200" cy="6.200" r="4.900" /><path d="M10 10l5.500 5.500" /></SearchMark>
              {courseTabs.map(([t, w], i) => <CourseTab key={t} $active={i === 0}><Fit w={w}>{t}</Fit></CourseTab>)}
            </CourseTabs>
            <SectionCard>
              <div><SectionTitle w={239}>Section 1: Course Orientation</SectionTitle><SectionMeta w={76}>5 / 10 | 31min</SectionMeta></div>
              <svg width="12" height="24" viewBox="0 0 12 24" {...line} strokeWidth="1.700"><path d="M1.500 10L6 15l4.500-5" /></svg>
            </SectionCard>
          </CoursePanel>
        </Page>
        <Scrollbar><Thumb /></Scrollbar>
        <VnButton><Vn size={24} /></VnButton>
        <CollapseButton><ArrowLeft size={24} strokeWidth={2.4} /></CollapseButton>
        <ToolPill>
          <svg width="20" height="19" viewBox="0 0 20 19" {...line} stroke="#c9c4bb" strokeWidth="1.600"><path d="M10 3.500C9 1.500 8 1 6 1H2c-.7 0-1 .3-1 1v12c0 .7.300 1 1 1h5c2 0 3 1 3 2.500 0-1.500 1-2.500 3-2.500h5c.7 0 1-.3 1-1V2c0-.7-.3-1-1-1h-4c-2 0-3 .5-4 2.500zV17" /></svg>
          <svg width="20" height="20" viewBox="0 0 20 20" {...line} stroke="#c9c4bb" strokeWidth="1.700"><path d="M1 3.500h9M5.500 1v2.500M2 9c4-1 5.500-3 6-5.500M3 5.500C4 7.500 7 9 9 9.500M11 19l4-9 4 9M12.500 16.500h5M14 1.500c3 0 4 1 4.500 4M1.500 14c0 3 1 4.500 4.500 4.500" /></svg>
        </ToolPill>
        <BotBubble><Bot size={26} /></BotBubble>
      </Body>
    </Screen>
  );
}
